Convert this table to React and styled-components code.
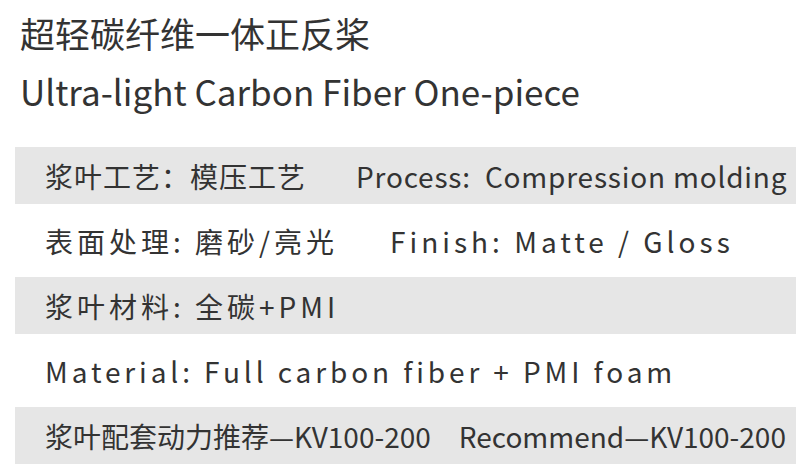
import React from "react";
import styled, { createGlobalStyle } from "styled-components";

const Global = createGlobalStyle`
  body {
    margin: 0;
    background: #fff;
    font-family: "Noto Sans CJK SC", "Noto Sans", sans-serif;
    color: #333;
  }
`;

const ROWS = [
  { shade: true, parts: [
    { text: "浆叶工艺：模压工艺", sp: 1 },
    { text: "Process:  Compression molding", sp: 0.8, gap: 50 }
  ] },
  { shade: false, parts: [
    { text: "表面处理: 磨砂/亮光", sp: 4 },
    { text: "Finish: Matte / Gloss", sp: 4, gap: 52 }
  ] },
  { shade: true, parts: [{ text: "浆叶材料: 全碳+PMI", sp: 4 }] },
  { shade: false, parts: [{ text: "Material: Full carbon fiber + PMI foam", sp: 3.9 }] },
  { shade: true, parts: [
    { text: "浆叶配套动力推荐—KV100-200", sp: 0 },
    { text: "Recommend—KV100-200", sp: 0, gap: 28 }
  ] }
];

export default function App() {
  return (
    <Page>
      <Global />
      <Head>
        <h1>超轻碳纤维一体正反桨</h1>
        <h2>Ultra-light Carbon Fiber One-piece</h2>
      </Head>
      <Table>
        {ROWS.map((r, i) => (
          <Row key={i} $shade={r.shade}>
            {r.parts.map((p, j) => (
              <Cell key={j} $sp={p.sp} $gap={p.gap || 0}>
                {p.text}
              </Cell>
            ))}
          </Row>
        ))}
      </Table>
    </Page>
  );
}

const Page = styled.div`
  width: 804px;
  height: 474px;
  overflow: hidden;
  padding: 8px 0 0 15px;
  box-sizing: border-box;
`;

const Head = styled.div`
  padding-left: 5px;
  margin-bottom: 31px;
  h1,
  h2 {
    margin: 0;
    font-weight: 400;
    font-size: 35px;
    line-height: 50px;
    color: #333;
  }
  h2 {
    margin-top: 8px;
  }
`;

const Table = styled.div`
  width: 781px;
  display: flex;
  flex-direction: column;
`;

const Row = styled.div`
  display: flex;
  align-items: center;
  height: ${props => (props.$shade ? "57px" : "73px")};
  padding-left: 30px;
  background: ${props => (props.$shade ? "#e6e6e6" : "transparent")};
  white-space: pre;
`;

const Cell = styled.span`
  font-size: 28px;
  line-height: 40px;
  letter-spacing: ${props => props.$sp}px;
  margin-left: ${props => props.$gap}px;
  color: #333;
`;
